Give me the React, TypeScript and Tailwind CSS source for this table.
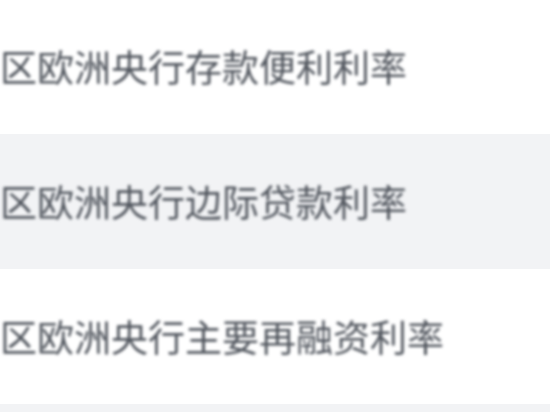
const rows = [
  '区欧洲央行存款便利利率',
  '区欧洲央行边际贷款利率',
  '区欧洲央行主要再融资利率',
];

export default function App() {
  return (
    <div className="w-[550px] h-[412px] overflow-hidden bg-white" style={{ fontFamily: '"Noto Sans CJK SC", sans-serif' }}>
      <div className="-mt-[1px] flex flex-col">
        {rows.map((r, i) => (
          <div key={i} className={`h-[135px] flex items-center whitespace-nowrap ${i % 2 === 1 ? 'bg-[#f2f3f5]' : 'bg-white'}`}>
            <span className="text-[37px] leading-none text-[#50555d] blur-[1.4px]">{r}</span>
          </div>
        ))}
        <div className="h-[135px] bg-[#f2f3f5]" />
      </div>
    </div>
  );
}
